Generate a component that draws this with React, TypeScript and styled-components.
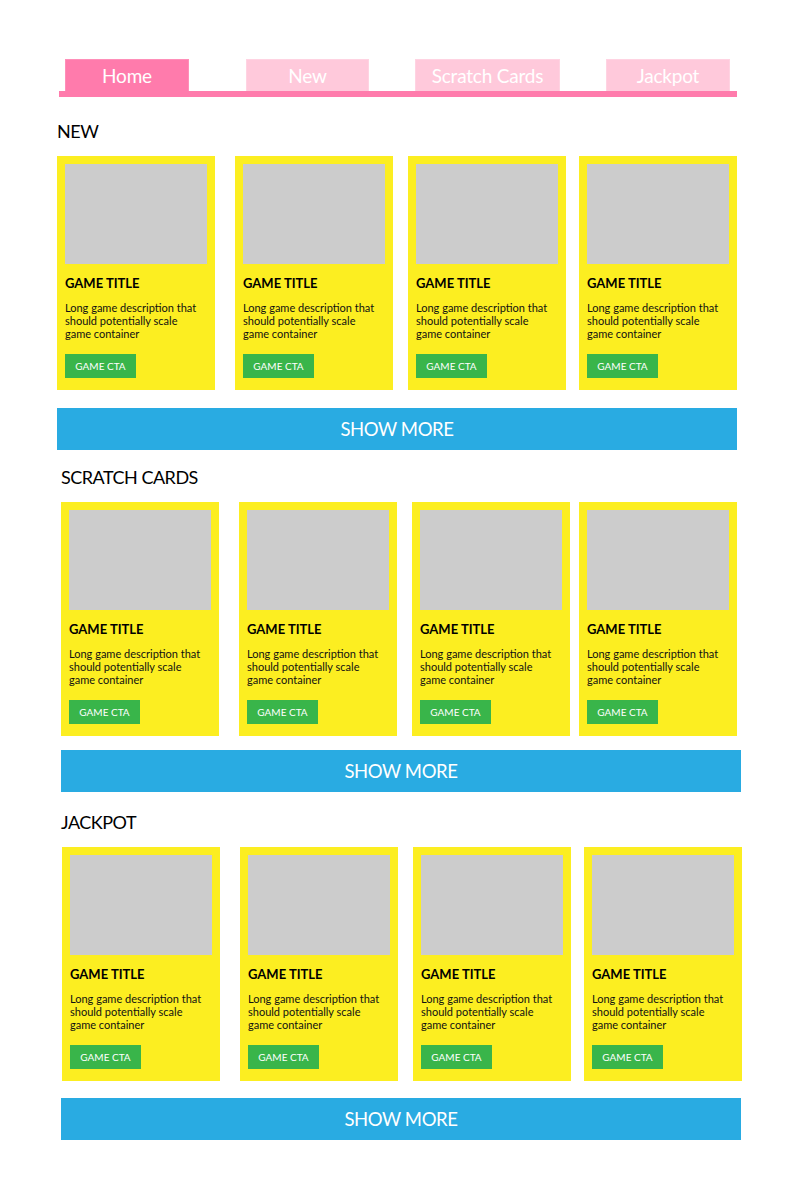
import styled, { createGlobalStyle } from "styled-components";

const GlobalStyle = createGlobalStyle`
  body {
    margin: 0;
    background: #fff;
    font-family: "Lato", "Open Sans", sans-serif;
    color: #000;
  }
`;

interface TabData {
  label: string;
  width: number;
  offset: number;
  active?: boolean;
}

const tabs: TabData[] = [
  { label: "Home", width: 124, offset: 6, active: true },
  { label: "New", width: 123, offset: 57 },
  { label: "Scratch Cards", width: 145, offset: 46 },
  { label: "Jackpot", width: 124, offset: 46 },
];

interface SectionData {
  title: string;
  left: number;
  top: number;
  offsets: number[];
  moreGap: number;
}

// the wireframe isn't perfectly aligned, so every section keeps its own offsets
const sections: SectionData[] = [
  { title: "NEW", left: 57, top: 25, offsets: [0, 20, 15, 13], moreGap: 18 },
  { title: "SCRATCH CARDS", left: 61, top: 18, offsets: [0, 20, 15, 9], moreGap: 14 },
  { title: "JACKPOT", left: 61, top: 21, offsets: [1, 20, 15, 13], moreGap: 17 },
];

const GameCard = ({ offset }: { offset: number }) => (
  <Card $offset={offset}>
    <Thumb />
    <GameTitle>GAME TITLE</GameTitle>
    <Description>Long game description that should potentially scale game container</Description>
    <CtaButton>GAME CTA</CtaButton>
  </Card>
);

export default function App() {
  return (
    <Page>
      <GlobalStyle />
      <TabBar>
        <TabList>
          {tabs.map((tab) => (
            <Tab key={tab.label} $active={tab.active} $width={tab.width} $offset={tab.offset}>
              {tab.label}
            </Tab>
          ))}
        </TabList>
        <Underline />
      </TabBar>
      {sections.map((section) => (
        <Section key={section.title} $left={section.left} $top={section.top}>
          <SectionTitle>{section.title}</SectionTitle>
          <CardRow>
            {section.offsets.map((offset, i) => (
              <GameCard key={i} offset={offset} />
            ))}
          </CardRow>
          <ShowMore $gap={section.moreGap}>SHOW MORE</ShowMore>
        </Section>
      ))}
    </Page>
  );
}

const Page = styled.div`
  width: 800px;
  min-height: 1200px;
  display: flex;
  flex-direction: column;
`;

const TabBar = styled.div`
  margin: 59px 0 0 59px;
  width: 678px;
  display: flex;
  flex-direction: column;
`;

const TabList = styled.div`
  display: flex;
  align-items: flex-end;
`;

interface TabProps {
  $active?: boolean;
  $width: number;
  $offset: number;
}

const Tab = styled.div<TabProps>`
  width: ${(p) => p.$width}px;
  margin-left: ${(p) => p.$offset}px;
  height: 32px;
  box-sizing: border-box;
  display: flex;
  align-items: center;
  justify-content: center;
  background: ${(p) => (p.$active ? "#ff7bac" : "#ffc9db")};
  border: 1px solid ${(p) => (p.$active ? "#ff8fb9" : "#ffd3e2")};
  border-bottom: none;
  color: #fff;
  font-size: 19px;
  letter-spacing: -0.2px;
  line-height: 31px;
`;

const Underline = styled.div`
  height: 6px;
  background: #ff7bac;
`;

interface SectionProps {
  $left: number;
  $top: number;
}

const Section = styled.section<SectionProps>`
  margin: ${(p) => p.$top}px 0 0 ${(p) => p.$left}px;
  width: 680px;
  display: flex;
  flex-direction: column;
`;

const SectionTitle = styled.h2`
  margin: 0 0 16px;
  font-size: 18px;
  line-height: 18px;
  font-weight: 400;
  letter-spacing: -0.5px;
`;

const CardRow = styled.div`
  display: flex;
`;

const Card = styled.div<{ $offset: number }>`
  margin-left: ${(p) => p.$offset}px;
  width: 158px;
  height: 234px;
  flex-shrink: 0;
  box-sizing: border-box;
  padding: 8px;
  background: #fcee21;
  display: flex;
  flex-direction: column;
  align-items: flex-start;
`;

const Thumb = styled.div`
  width: 142px;
  height: 100px;
  background: #cccccc;
`;

const GameTitle = styled.h3`
  margin: 13px 0 0;
  font-size: 13px;
  line-height: 13px;
  font-weight: 700;
`;

const Description = styled.p`
  margin: 11px 0 0;
  max-width: 134px;
  font-size: 11px;
  line-height: 13px;
  color: #111;
`;

const CtaButton = styled.button`
  margin-top: 14px;
  width: 71px;
  height: 24px;
  padding: 0;
  border: none;
  background: #39b54a;
  color: #fff;
  font-family: inherit;
  font-size: 10px;
  line-height: 24px;
`;

const ShowMore = styled.button<{ $gap: number }>`
  margin-top: ${(p) => p.$gap}px;
  width: 680px;
  height: 42px;
  padding: 0;
  border: none;
  background: #29abe2;
  color: #fff;
  font-family: inherit;
  font-size: 18.5px;
  letter-spacing: -0.4px;
  line-height: 42px;
`;
